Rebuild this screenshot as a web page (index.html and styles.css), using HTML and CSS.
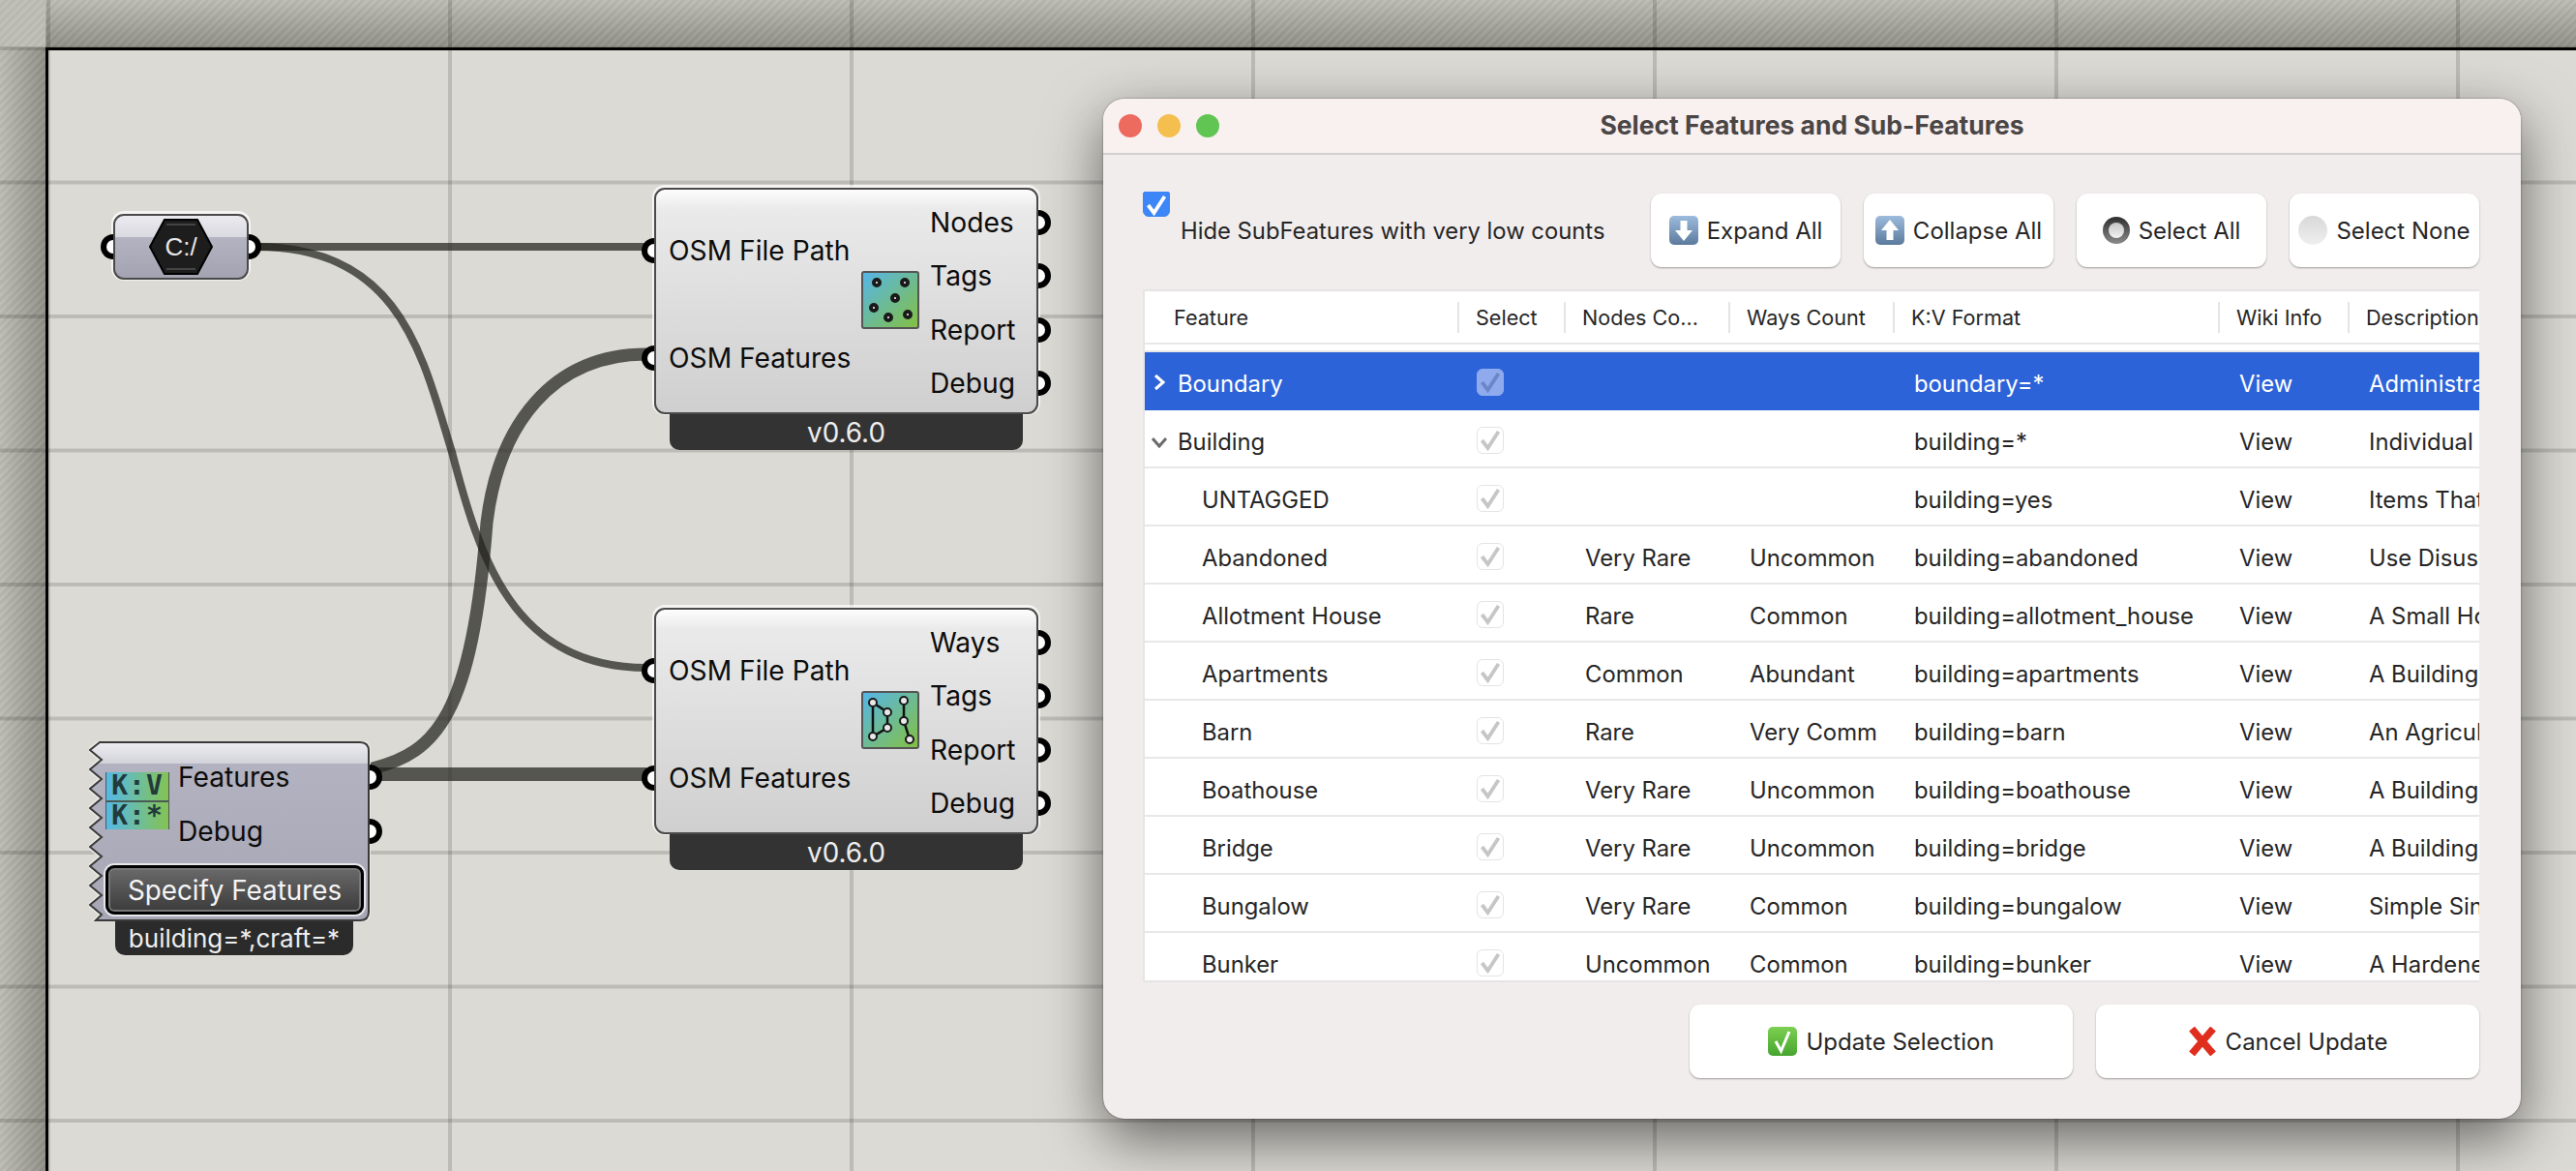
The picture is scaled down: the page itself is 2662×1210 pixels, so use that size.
FILE: index.html
```html
<!DOCTYPE html>
<html lang="en">
<head>
    <meta charset="UTF-8">
    <title>Select Features and Sub-Features</title>
    <link rel="stylesheet" href="styles.css">
</head>
<body>

<svg class="defs" width="0" height="0">
    <defs>
        <symbol id="tick" viewBox="0 0 28 28">
            <path d="M5.5 14 L11.5 22 L22.5 5" fill="none" stroke-width="3.8" stroke="currentColor"/>
        </symbol>
        <linearGradient id="iconFill" x1="0" y1="0" x2="1" y2="1">
            <stop offset="0" stop-color="#55b5ea"/>
            <stop offset="1" stop-color="#84c040"/>
        </linearGradient>
        <linearGradient id="featFill" x1="0" y1="0" x2="0" y2="1">
            <stop offset="0" stop-color="#ededf1"/>
            <stop offset="0.12" stop-color="#d2d2da"/>
            <stop offset="0.12" stop-color="#b2b2c0"/>
            <stop offset="1" stop-color="#a6a6b4"/>
        </linearGradient>
        <linearGradient id="downFill" x1="0" y1="0" x2="0" y2="1">
            <stop offset="0" stop-color="#9dbbdc"/>
            <stop offset="1" stop-color="#5c7a9c"/>
        </linearGradient>
        <linearGradient id="okFill" x1="0" y1="0" x2="0" y2="1">
            <stop offset="0" stop-color="#7cd051"/>
            <stop offset="1" stop-color="#46a52f"/>
        </linearGradient>
        <linearGradient id="ringFill" x1="0" y1="0" x2="0" y2="1">
            <stop offset="0" stop-color="#2e2e2e"/>
            <stop offset="1" stop-color="#8a8a8a"/>
        </linearGradient>
        <linearGradient id="coreFill" x1="0" y1="0" x2="0" y2="1">
            <stop offset="0" stop-color="#c4c4c4"/>
            <stop offset="1" stop-color="#f2f2f2"/>
        </linearGradient>
        <linearGradient id="ballFill" x1="0" y1="0" x2="0" y2="1">
            <stop offset="0" stop-color="#d8d8d8"/>
            <stop offset="1" stop-color="#efefef"/>
        </linearGradient>
    </defs>
</svg>

<div class="stage">
    <div class="corner"></div>
    <div class="ruler-top"></div>
    <div class="ruler-left"></div>
    <div class="sheet"></div>
    <div class="gridlines"></div>

    <svg class="wires" width="2662" height="1210">
        <path class="wire" d="M265 255 H668"/>
        <path class="wire" d="M265 255 C415 255 437 370 467 467 C495 575 530 690 668 690"/>
        <path class="wire wire-fat" d="M380 797 L385 794 C450 778 488 740 503 540 C515 440 570 366 668 366"/>
        <path class="wire wire-straight" d="M390 800 H668"/>
    </svg>

    <!-- path param -->
    <div class="node node-path">
        <div class="body body-path">
            <span class="port port-in"></span>
            <svg class="hex" width="68" height="60" viewBox="0 0 68 60">
                <path d="M17 2 H51 L66 30 L51 58 H17 L2 30 Z" fill="#1d1d1d" stroke="#000" stroke-width="2"/>
                <path d="M19 7 H49" stroke="#444" stroke-width="2"/>
                <path d="M19 53 H49" stroke="#444" stroke-width="2"/>
                <text x="34" y="39" text-anchor="middle" class="hex-text">C:/</text>
            </svg>
            <span class="port port-out"></span>
        </div>
    </div>

    <!-- nodes reader -->
    <div class="node node-nodes">
        <div class="body">
            <div class="inputs">
                <div class="param"><span class="port port-in"></span>OSM File Path</div>
                <div class="param"><span class="port port-in"></span>OSM Features</div>
            </div>
            <svg class="comp-icon" width="60" height="60" viewBox="0 0 60 60">
                <rect x="1" y="1" width="58" height="58" rx="2" fill="url(#iconFill)" stroke="#555" stroke-width="2"/>
                <g fill="#fff" stroke="#1a1a1a" stroke-width="4">
                    <circle cx="16" cy="12" r="3"/>
                    <circle cx="45" cy="12" r="3"/>
                    <circle cx="35" cy="28" r="3"/>
                    <circle cx="13" cy="38" r="3"/>
                    <circle cx="28" cy="48" r="3"/>
                    <circle cx="48" cy="45" r="3"/>
                </g>
            </svg>
            <div class="outputs">
                <div class="param">Nodes<span class="port port-out"></span></div>
                <div class="param">Tags<span class="port port-out"></span></div>
                <div class="param">Report<span class="port port-out"></span></div>
                <div class="param">Debug<span class="port port-out"></span></div>
            </div>
        </div>
        <div class="tab tab-wide">v0.6.0</div>
    </div>

    <!-- ways reader -->
    <div class="node node-ways">
        <div class="body">
            <div class="inputs">
                <div class="param"><span class="port port-in"></span>OSM File Path</div>
                <div class="param"><span class="port port-in"></span>OSM Features</div>
            </div>
            <svg class="comp-icon" width="60" height="60" viewBox="0 0 60 60">
                <rect x="1" y="1" width="58" height="58" rx="2" fill="url(#iconFill)" stroke="#555" stroke-width="2"/>
                <path d="M12 12 L27 22 V38 L12 47 Z M44 10 V31 L50 50" fill="none" stroke="#111" stroke-width="2.5"/>
                <g fill="#e8e8e8" stroke="#1a1a1a" stroke-width="2">
                    <circle cx="12" cy="12" r="4"/>
                    <circle cx="27" cy="22" r="4"/>
                    <circle cx="27" cy="38" r="4"/>
                    <circle cx="12" cy="47" r="4"/>
                    <circle cx="44" cy="10" r="4"/>
                    <circle cx="44" cy="31" r="4"/>
                    <circle cx="50" cy="50" r="4"/>
                </g>
            </svg>
            <div class="outputs">
                <div class="param">Ways<span class="port port-out"></span></div>
                <div class="param">Tags<span class="port port-out"></span></div>
                <div class="param">Report<span class="port port-out"></span></div>
                <div class="param">Debug<span class="port port-out"></span></div>
            </div>
        </div>
        <div class="tab tab-wide">v0.6.0</div>
    </div>

    <!-- feature picker -->
    <div class="node node-features">
        <div class="feat-body">
            <svg class="feat-shape" width="291" height="186" viewBox="-1 -1 291 186">
                <path fill="url(#featFill)" stroke="#e9e9e4" stroke-width="5" d="M10 0 L0 8 L12 18 L0 28 L12 38 L0 48 L12 58 L0 68 L12 78 L0 88 L12 98 L0 108 L12 118 L0 128 L12 138 L0 148 L12 158 L0 168 L12 178 L6 184 H279 Q288 184 288 175 V9 Q288 0 279 0 Z"/>
                <path fill="url(#featFill)" stroke="#3a3a3a" stroke-width="2" d="M10 0 L0 8 L12 18 L0 28 L12 38 L0 48 L12 58 L0 68 L12 78 L0 88 L12 98 L0 108 L12 118 L0 128 L12 138 L0 148 L12 158 L0 168 L12 178 L6 184 H279 Q288 184 288 175 V9 Q288 0 279 0 Z"/>
            </svg>
            <div class="feat-main">
                <div class="kv-icon">
                    <span>K:V</span>
                    <span>K:*</span>
                </div>
                <div class="feat-outputs">
                    <div class="param">Features<span class="port port-out"></span></div>
                    <div class="param">Debug<span class="port port-out"></span></div>
                </div>
            </div>
            <div class="feat-button">Specify Features</div>
        </div>
        <div class="tab tab-feat">building=*,craft=*</div>
    </div>

    <!-- dialog -->
    <div class="dialog">
        <div class="titlebar">
            <div class="lights">
                <span class="light red"></span>
                <span class="light yellow"></span>
                <span class="light green"></span>
            </div>
            <div class="title">Select Features and Sub-Features</div>
        </div>

        <div class="dialog-body">
            <div class="toolbar">
                <div class="hide-option">
                    <span class="box box-on"><svg width="28" height="28"><use href="#tick"/></svg></span>
                    <span class="hide-label">Hide SubFeatures with very low counts</span>
                </div>
                <div class="buttons">
                    <div class="btn">
                        <svg width="30" height="30" viewBox="0 0 30 30">
                            <rect width="30" height="30" rx="5" fill="url(#downFill)"/>
                            <path d="M11.5 5 H18.5 V15 H24 L15 26 L6 15 H11.5 Z" fill="#fff"/>
                        </svg>
                        Expand All
                    </div>
                    <div class="btn">
                        <svg width="30" height="30" viewBox="0 0 30 30">
                            <rect width="30" height="30" rx="5" fill="url(#downFill)"/>
                            <path d="M11.5 25 H18.5 V15 H24 L15 4 L6 15 H11.5 Z" fill="#fff"/>
                        </svg>
                        Collapse All
                    </div>
                    <div class="btn">
                        <svg width="28" height="28" viewBox="0 0 28 28">
                            <circle cx="14" cy="14" r="14" fill="url(#ringFill)"/>
                            <circle cx="14" cy="14" r="8" fill="url(#coreFill)"/>
                        </svg>
                        Select All
                    </div>
                    <div class="btn">
                        <svg width="30" height="30" viewBox="0 0 30 30">
                            <circle cx="15" cy="15" r="15" fill="url(#ballFill)"/>
                        </svg>
                        Select None
                    </div>
                </div>
            </div>

            <div class="table">
                <div class="row head">
                    <div class="th th-first">Feature</div>
                    <div class="th">Select</div>
                    <div class="th">Nodes Co...</div>
                    <div class="th">Ways Count</div>
                    <div class="th">K:V Format</div>
                    <div class="th">Wiki Info</div>
                    <div class="th">Description</div>
                </div>

                <div class="row picked">
                    <div class="td td-name"><svg class="chevron" width="12" height="18" viewBox="0 0 12 18"><path d="M2 2 L10 9 L2 16"/></svg>Boundary</div>
                    <div class="td-check"><span class="box box-picked"><svg width="28" height="28"><use href="#tick"/></svg></span></div>
                    <div class="td"></div>
                    <div class="td"></div>
                    <div class="td">boundary=*</div>
                    <div class="td">View</div>
                    <div class="td td-desc">Administrative</div>
                </div>
                <div class="row">
                    <div class="td td-name"><svg class="chevron chevron-open" width="18" height="12" viewBox="0 0 18 12"><path d="M2 2 L9 10 L16 2"/></svg>Building</div>
                    <div class="td-check"><span class="box"><svg width="28" height="28"><use href="#tick"/></svg></span></div>
                    <div class="td"></div>
                    <div class="td"></div>
                    <div class="td">building=*</div>
                    <div class="td">View</div>
                    <div class="td td-desc">Individual</div>
                </div>
                <div class="row">
                    <div class="td td-sub">UNTAGGED</div>
                    <div class="td-check"><span class="box"><svg width="28" height="28"><use href="#tick"/></svg></span></div>
                    <div class="td"></div>
                    <div class="td"></div>
                    <div class="td">building=yes</div>
                    <div class="td">View</div>
                    <div class="td td-desc">Items That</div>
                </div>
                <div class="row">
                    <div class="td td-sub">Abandoned</div>
                    <div class="td-check"><span class="box"><svg width="28" height="28"><use href="#tick"/></svg></span></div>
                    <div class="td">Very Rare</div>
                    <div class="td">Uncommon</div>
                    <div class="td">building=abandoned</div>
                    <div class="td">View</div>
                    <div class="td td-desc">Use Disused</div>
                </div>
                <div class="row">
                    <div class="td td-sub">Allotment House</div>
                    <div class="td-check"><span class="box"><svg width="28" height="28"><use href="#tick"/></svg></span></div>
                    <div class="td">Rare</div>
                    <div class="td">Common</div>
                    <div class="td">building=allotment_house</div>
                    <div class="td">View</div>
                    <div class="td td-desc">A Small House</div>
                </div>
                <div class="row">
                    <div class="td td-sub">Apartments</div>
                    <div class="td-check"><span class="box"><svg width="28" height="28"><use href="#tick"/></svg></span></div>
                    <div class="td">Common</div>
                    <div class="td">Abundant</div>
                    <div class="td">building=apartments</div>
                    <div class="td">View</div>
                    <div class="td td-desc">A Building</div>
                </div>
                <div class="row">
                    <div class="td td-sub">Barn</div>
                    <div class="td-check"><span class="box"><svg width="28" height="28"><use href="#tick"/></svg></span></div>
                    <div class="td">Rare</div>
                    <div class="td">Very Comm</div>
                    <div class="td">building=barn</div>
                    <div class="td">View</div>
                    <div class="td td-desc">An Agricultural</div>
                </div>
                <div class="row">
                    <div class="td td-sub">Boathouse</div>
                    <div class="td-check"><span class="box"><svg width="28" height="28"><use href="#tick"/></svg></span></div>
                    <div class="td">Very Rare</div>
                    <div class="td">Uncommon</div>
                    <div class="td">building=boathouse</div>
                    <div class="td">View</div>
                    <div class="td td-desc">A Building</div>
                </div>
                <div class="row">
                    <div class="td td-sub">Bridge</div>
                    <div class="td-check"><span class="box"><svg width="28" height="28"><use href="#tick"/></svg></span></div>
                    <div class="td">Very Rare</div>
                    <div class="td">Uncommon</div>
                    <div class="td">building=bridge</div>
                    <div class="td">View</div>
                    <div class="td td-desc">A Building</div>
                </div>
                <div class="row">
                    <div class="td td-sub">Bungalow</div>
                    <div class="td-check"><span class="box"><svg width="28" height="28"><use href="#tick"/></svg></span></div>
                    <div class="td">Very Rare</div>
                    <div class="td">Common</div>
                    <div class="td">building=bungalow</div>
                    <div class="td">View</div>
                    <div class="td td-desc">Simple Single</div>
                </div>
                <div class="row">
                    <div class="td td-sub">Bunker</div>
                    <div class="td-check"><span class="box"><svg width="28" height="28"><use href="#tick"/></svg></span></div>
                    <div class="td">Uncommon</div>
                    <div class="td">Common</div>
                    <div class="td">building=bunker</div>
                    <div class="td">View</div>
                    <div class="td td-desc">A Hardened</div>
                </div>
            </div>

            <div class="footer">
                <div class="btn btn-wide">
                    <svg width="30" height="30" viewBox="0 0 30 30">
                        <rect width="30" height="30" rx="5" fill="url(#okFill)"/>
                        <path d="M8 15 L13.5 25 L22 5" fill="none" stroke="#fff" stroke-width="3"/>
                    </svg>
                    Update Selection
                </div>
                <div class="btn btn-wide">
                    <svg width="30" height="30" viewBox="0 0 30 30">
                        <path d="M4 2 L26 28 M26 2 L4 28" fill="none" stroke="#e02e1e" stroke-width="7.5"/>
                    </svg>
                    Cancel Update
                </div>
            </div>
        </div>
    </div>
</div>

</body>
</html>
```

FILE: styles.css
```css
html, body {
    margin: 0;
    padding: 0;
    overflow: hidden;
    font-family: "Inter", "Liberation Sans", sans-serif;
    color: #111;
}

.defs {
    position: absolute;
}

.stage {
    position: relative;
    width: 2662px;
    height: 1210px;
    display: grid;
    grid-template-columns: 47px 1fr;
    grid-template-rows: 49px 1fr;
    overflow: hidden;
}

/* rulers round the canvas */
.corner {
    background: repeating-linear-gradient(135deg, rgba(255,255,255,.05) 0 3px, rgba(0,0,0,.02) 3px 6px), #bdbcb4;
}

.ruler-top {
    background: repeating-linear-gradient(135deg, rgba(255,255,255,.05) 0 3px, rgba(0,0,0,.03) 3px 6px), linear-gradient(#bcbbb3, #8f8e86);
}

.ruler-left {
    background: repeating-linear-gradient(135deg, rgba(255,255,255,.05) 0 3px, rgba(0,0,0,.03) 3px 6px), linear-gradient(90deg, #bcbbb3, #8f8e86);
}

.sheet {
    background: #dcdad4;
    border-top: 3px solid #000;
    border-left: 3px solid #000;
}

.gridlines {
    position: absolute;
    inset: 0;
    background-image:
        linear-gradient(90deg, rgba(0,0,0,.14) 4px, transparent 4px),
        linear-gradient(rgba(0,0,0,.14) 4px, transparent 4px);
    background-size: 415px 100%, 100% 138.5px;
    background-position: 48px 0, 0 48px;
}

.wires {
    position: absolute;
    left: 0;
    top: 0;
}

.wire {
    fill: none;
    stroke: rgba(35,35,30,.72);
    stroke-width: 8;
}

.wire-fat {
    stroke-width: 13;
}

.wire-straight {
    stroke-width: 14;
}

/* grasshopper components */
.node {
    position: absolute;
    display: flex;
    flex-direction: column;
    font-size: 28.2px;
    line-height: 36px;
    color: #0c0c0c;
}

.node-path { left: 117px; top: 221px; }
.node-nodes { left: 676px; top: 194px; }
.node-ways { left: 676px; top: 628px; }
.node-features { left: 93px; top: 767px; }

.body {
    box-sizing: border-box;
    width: 397px;
    height: 234px;
    display: flex;
    border: 2px solid #4a4a4a;
    border-radius: 11px;
    background: linear-gradient(#fdfdfd 0, #ebebeb 19px, #eaeaea 19px, #cfcfcf 100%);
    box-shadow: 0 -1px 0 2px rgba(255,255,255,.7);
}

.body-path {
    width: 140px;
    height: 68px;
    align-items: center;
    justify-content: center;
    position: relative;
    background: linear-gradient(#ebebf0 0, #d9d9e0 22px, #b3b3c1 22px, #a3a3b2 100%);
}

.port {
    position: absolute;
    top: 50%;
    margin-top: -13px;
    box-sizing: border-box;
    width: 13px;
    height: 26px;
    background: #fff;
    border: 6px solid #000;
}

.port-in {
    left: -15px;
    border-right: 0;
    border-radius: 13px 0 0 13px;
}

.port-out {
    right: -15px;
    border-left: 0;
    border-radius: 0 13px 13px 0;
}

.hex-text {
    font-family: "Liberation Sans", sans-serif;
    font-size: 26px;
    fill: #e8e8e8;
}

.inputs {
    width: 212px;
    padding-top: 7px;
}

.inputs .param {
    height: 111px;
    padding-left: 13px;
}

.outputs {
    padding-top: 6px;
    margin-left: 11px;
    flex: 1;
}

.outputs .param {
    height: 55.5px;
}

.param {
    position: relative;
    display: flex;
    align-items: center;
}

.comp-icon {
    margin-top: 84px;
}

.tab {
    background: #333;
    color: #eee;
    text-align: center;
    border-radius: 0 0 10px 10px;
}

.tab-wide {
    margin: 0 16px;
    height: 37px;
    font-size: 27.8px;
    line-height: 39px;
}

.feat-body {
    position: relative;
    width: 289px;
    height: 184px;
}

.feat-shape {
    position: absolute;
    left: -1px;
    top: -1px;
}

.feat-main {
    position: relative;
    display: flex;
}

.kv-icon {
    width: 66px;
    height: 59px;
    margin: 31px 9px 0 16px;
    display: flex;
    flex-direction: column;
    gap: 2px;
    background: #4a5a55;
    font-family: "DejaVu Sans Mono", monospace;
    font-weight: bold;
    font-size: 28px;
    line-height: 28px;
    letter-spacing: 1px;
    color: #223a3a;
    text-align: center;
    padding: 0 1px;
    box-sizing: border-box;
}

.kv-icon span {
    flex: 1;
    background: linear-gradient(90deg, #55b9e8, #85c253);
}

.feat-outputs {
    flex: 1;
    padding-top: 8px;
}

.feat-outputs .param {
    height: 56px;
}

.feat-outputs .port-out {
    right: -13px;
}

.feat-button {
    position: absolute;
    left: 16px;
    top: 127px;
    box-sizing: border-box;
    width: 267px;
    height: 51px;
    border: 3px solid #000;
    border-radius: 9px;
    background: linear-gradient(#6a6a6a, #3b3b3b);
    box-shadow: 0 0 0 2px #e6e6ea, inset 0 0 0 2px #777;
    color: #f4f4f4;
    text-align: center;
    font-size: 27.8px;
    line-height: 47px;
}

.tab-feat {
    margin: 0 17px 0 26px;
    height: 36px;
    background: #2b2b2b;
    font-size: 26px;
    line-height: 37px;
}

/* dialog window */
.dialog {
    position: absolute;
    left: 1140px;
    top: 102px;
    width: 1465px;
    height: 1054px;
    background: #f2eded;
    border-radius: 22px;
    box-shadow: 0 20px 60px rgba(0,0,0,.55), 0 0 2px rgba(0,0,0,.5);
    overflow: hidden;
    font-size: 24px;
    color: #262626;
}

.titlebar {
    position: relative;
    height: 56px;
    background: #f9f0f0;
    border-bottom: 2px solid #d2cfcf;
    display: flex;
    align-items: center;
    justify-content: center;
}

.lights {
    position: absolute;
    left: 16px;
    top: 16px;
    display: flex;
    gap: 16px;
}

.light {
    width: 24px;
    height: 24px;
    border-radius: 50%;
}

.red { background: #ec6a5e; }
.yellow { background: #f4bf4f; }
.green { background: #61c554; }

.title {
    font-weight: 700;
    font-size: 26.5px;
    color: #4a4645;
    padding-bottom: 2px;
}

.dialog-body {
    padding: 40px 43px 0 41px;
}

.toolbar {
    display: flex;
    justify-content: space-between;
    height: 76px;
}

.hide-option {
    position: relative;
    padding: 24px 0 0 39px;
    font-size: 23.8px;
}

.hide-label {
    line-height: 30px;
}

.box {
    box-sizing: border-box;
    display: block;
    width: 28px;
    height: 28px;
    border-radius: 6px;
    background: #fff;
    border: 1px solid #e4e4e4;
    color: #c6c6c6;
}

.box svg {
    display: block;
    margin: -1px;
}

.box-on {
    position: absolute;
    left: 0;
    top: -2px;
    height: 26px;
    border-radius: 2px 2px 6px 6px;
    background: #3d86f7;
    border-color: #3d86f7;
    color: #fff;
}

.box-picked {
    background: #8fabee;
    border-color: #8fabee;
    color: #6d86c8;
}

.buttons {
    display: flex;
    gap: 24px;
}

.btn {
    box-sizing: border-box;
    width: 196px;
    height: 76px;
    display: flex;
    align-items: center;
    justify-content: center;
    gap: 9px;
    background: #fff;
    border-radius: 11px;
    box-shadow: 0 1px 2px rgba(0,0,0,.35);
    white-space: nowrap;
}

/* feature table */
.table {
    margin-top: 23px;
    height: 716px;
    box-sizing: border-box;
    border: 2px solid #e6e4e4;
    border-right: 0;
    background: #fff;
    overflow: hidden;
}

.row {
    display: grid;
    grid-template-columns: 323px 110px 170px 170px 336px 134px 300px;
    height: 60px;
    box-sizing: border-box;
    border-bottom: 2px solid #e8e8e8;
    align-items: center;
    font-size: 23.8px;
}

.head {
    height: 63px;
    border-bottom: 0;
    background: linear-gradient(#fff 53px, #e8e8e8 53px, #e8e8e8 55px, #fff 55px, #fff 61px, #e8e8e8 61px);
    font-size: 21.6px;
    padding-bottom: 9px;
}

.th {
    height: 32px;
    line-height: 32px;
    padding-left: 17px;
    border-left: 2px solid #e4e4e4;
    white-space: nowrap;
    overflow: hidden;
}

.th-first {
    border-left: 0;
    padding-left: 30px;
}

.td {
    margin: 0 14px 0 22px;
    white-space: nowrap;
    overflow: hidden;
    line-height: 32px;
    padding-top: 7px;
}

.td-name {
    display: flex;
    align-items: center;
    margin-left: 7px;
}

.td-sub {
    margin-left: 59px;
}

.td-desc {
    margin-right: 0;
}

.td-check {
    padding: 3px 0 0 20px;
}

.chevron {
    fill: none;
    stroke: #fff;
    stroke-width: 3;
    margin: 0 13px 4px 2px;
}

.chevron-open {
    stroke: #6b6b6b;
    margin: 0 10px 0 -1px;
}

.picked {
    background: #2d63d9;
    color: #fff;
    border-bottom-color: #2d63d9;
}

.footer {
    margin-top: 23px;
    display: flex;
    justify-content: flex-end;
    gap: 24px;
}

.btn-wide {
    width: 396px;
}
```
